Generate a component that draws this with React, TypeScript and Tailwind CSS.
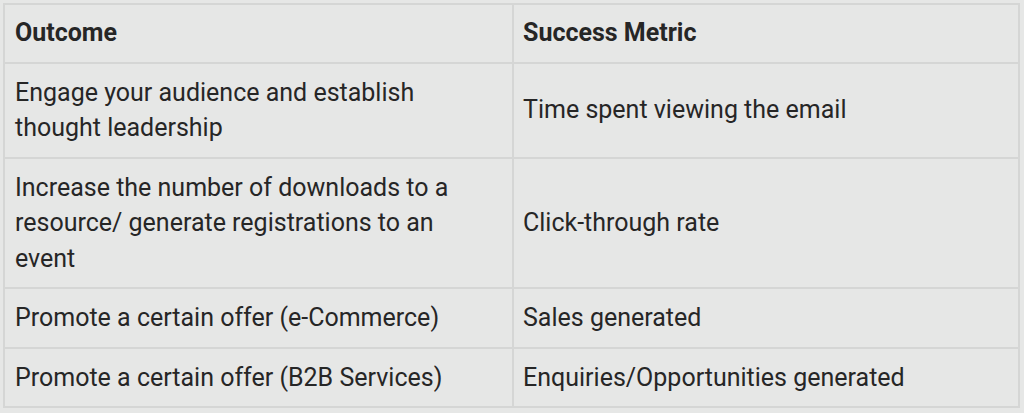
const rows = [
  ["Engage your audience and establish thought leadership", "Time spent viewing the email"],
  ["Increase the number of downloads to a resource/ generate registrations to an event", "Click-through rate"],
  ["Promote a certain offer (e-Commerce)", "Sales generated"],
  ["Promote a certain offer (B2B Services)", "Enquiries/Opportunities generated"],
];

export default function App() {
  return (
    <div className="w-[1024px] h-[413px] bg-[#e6e7e6] p-[3px] font-['Roboto',sans-serif] text-[#262626]">
      <table className="w-[1017px] border-collapse border-2 border-[#d5d6d5] text-[25px] leading-[35.5px]">
        <thead>
          <tr>
            <th className="w-[509px] border-2 border-[#d5d6d5] pl-[10px] pr-[11px] pt-[10px] pb-[11px] text-left font-bold">
              Outcome
            </th>
            <th className="border-2 border-[#d5d6d5] pl-[9px] pr-[10px] pt-[10px] pb-[11px] text-left font-bold">
              Success Metric
            </th>
          </tr>
        </thead>
        <tbody>
          {rows.map(([outcome, metric]) => (
            <tr key={outcome}>
              <td className="border-2 border-[#d5d6d5] pl-[10px] pr-[46px] py-[11px]">{outcome}</td>
              <td className="border-2 border-[#d5d6d5] pl-[9px] pr-[10px] py-[11px]">{metric}</td>
            </tr>
          ))}
        </tbody>
      </table>
    </div>
  );
}
